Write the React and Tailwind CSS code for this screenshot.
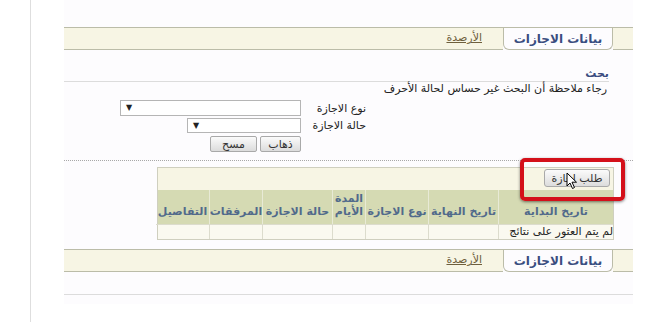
const cream = "bg-[#f7f5e4]";

function TabStrip() {
  return (
    <div className="flex h-[23px] border-t border-[#bbbca8]">
      <div className={`w-[20px] border-b border-[#bbbca8] ${cream}`} />
      <div className="flex w-[110px] items-center justify-center rounded-b-[6px] border-x border-b border-[#bbbca8] bg-[#fdfcfe] text-[12px] font-bold text-[#3a4d80]">
        بيانات الاجازات
      </div>
      <div className={`flex flex-1 items-center border-b border-[#bbbca8] pr-[21px] ${cream}`}>
        <a href="#" className="text-[11px] text-[#6e5f3d] underline">
          الأرصدة
        </a>
      </div>
    </div>
  );
}

function GrayButton({ children, className = "" }) {
  return (
    <button
      type="button"
      className={`flex items-center justify-center rounded-[2px] border border-[#a9a9a9] bg-gradient-to-b from-[#fbfbfb] to-[#dcdcdc] text-[11px] leading-none text-[#333] ${className}`}
    >
      {children}
    </button>
  );
}

function Select({ className = "" }) {
  return (
    <div className={`flex items-center justify-end border border-[#b5b5b5] bg-white pl-[5px] ${className}`}>
      <span className="text-[8px] leading-none text-[#222]">▼</span>
    </div>
  );
}

const columns = [
  { w: "w-[115px]", label: "تاريخ البداية" },
  { w: "w-[70px]", label: "تاريخ النهاية" },
  { w: "w-[63px]", label: "نوع الاجازة" },
  { w: "w-[33px]", label: "المدة الأيام", two: true },
  { w: "w-[70px]", label: "حالة الاجازة" },
  { w: "w-[53px]", label: "المرفقات" },
  { w: "w-[53px]", label: "التفاصيل" },
];

function Cursor() {
  return (
    <svg width="12" height="18" viewBox="0 0 12 18" className="absolute left-[42px] top-[10px]">
      <path
        d="M1 1 L1 14 L4 11 L6.5 16.5 L8.5 15.5 L6 10.2 L10.5 10.2 Z"
        fill="#fff"
        stroke="#000"
        strokeWidth="1"
        strokeLinejoin="round"
      />
    </svg>
  );
}

export default function App() {
  return (
    <div
      className="flex h-[322px] w-[667px] overflow-hidden bg-white text-[#222]"
      style={{ fontFamily: '"DejaVu Sans", Tahoma, sans-serif' }}
    >
      <div className="h-full w-[31px] shrink-0 border-r border-[#dedede]" />
      <div className="w-[33px] shrink-0" />
      <div dir="rtl" className="flex h-[304px] w-[569px] shrink-0 flex-col bg-[#fdfcfe] pt-[27px]">
        <TabStrip />

        <div className="mr-[24px] mt-[17px] border-b border-[#dcdcdc] pb-[1px] text-[11px] font-bold leading-[13px] text-[#3a4d80]">
          بحث
        </div>
        <p className="mr-[26px] text-[11px] leading-[14px]">
          رجاء ملاحظة أن البحث غير حساس لحالة الأحرف
        </p>

        <div className="mr-[267px] mt-[4px] flex flex-col gap-[2px]">
          <div className="flex h-[16px] items-center">
            <span className="w-[65px] shrink-0 whitespace-nowrap text-[11px] leading-none">نوع الاجازة</span>
            <Select className="h-[16px] w-[181px]" />
          </div>
          <div className="flex h-[15px] items-center">
            <span className="w-[65px] shrink-0 whitespace-nowrap text-[11px] leading-none">حالة الاجازة</span>
            <Select className="h-[15px] w-[114px]" />
          </div>
          <div className="mr-[65px] mt-[1px] flex gap-[3px]">
            <GrayButton className="h-[16px] w-[41px]">ذهاب</GrayButton>
            <GrayButton className="h-[16px] w-[47px]">مسح</GrayButton>
          </div>
        </div>

        <div className="mt-[8px] border-t border-dotted border-[#a8a8a8]" />

        <div className="relative mr-[19px] mt-[6px] w-[457px] border border-[#cfcfbf] bg-[#faf9f0]">
          <div className={`flex h-[22px] items-start pr-[3px] pt-[1px] ${cream}`}>
            <GrayButton className="h-[18px] w-[66px] rounded-[3px]">طلب اجازة</GrayButton>
          </div>
          <div className="flex h-[34px] bg-[#d5dab3]">
            {columns.map((c) => (
              <div
                key={c.label}
                className={`${c.w} flex shrink-0 items-end justify-center whitespace-nowrap border-l border-[#e8ead6] pb-[6px] text-center text-[11px] font-bold leading-[13px] text-[#516a8b] last:border-l-0`}
              >
                {c.two ? (
                  <span>
                    المدة
                    <br />
                    الأيام
                  </span>
                ) : (
                  c.label
                )}
              </div>
            ))}
          </div>
          <div className="flex h-[15px]">
            {columns.map((c, i) => (
              <div
                key={c.label}
                className={`${c.w} shrink-0 whitespace-nowrap border-l border-t border-[#dcdccd] last:border-l-0`}
              >
                {i === 0 ? (
                  <span className="block text-[11px] leading-[14px]">لم يتم العثور على نتائج</span>
                ) : null}
              </div>
            ))}
          </div>

          <div className="pointer-events-none absolute right-[-12px] top-[-10px] h-[43px] w-[105px] rounded-[5px] border-[4px] border-[#d4101a] shadow-[0_1px_3px_rgba(0,0,0,0.5)]">
            <Cursor />
          </div>
        </div>

        <div className="mt-[9px]">
          <TabStrip />
        </div>

        <div className="mt-[22px] border-t border-[#dcdcdc]" />
      </div>
    </div>
  );
}
